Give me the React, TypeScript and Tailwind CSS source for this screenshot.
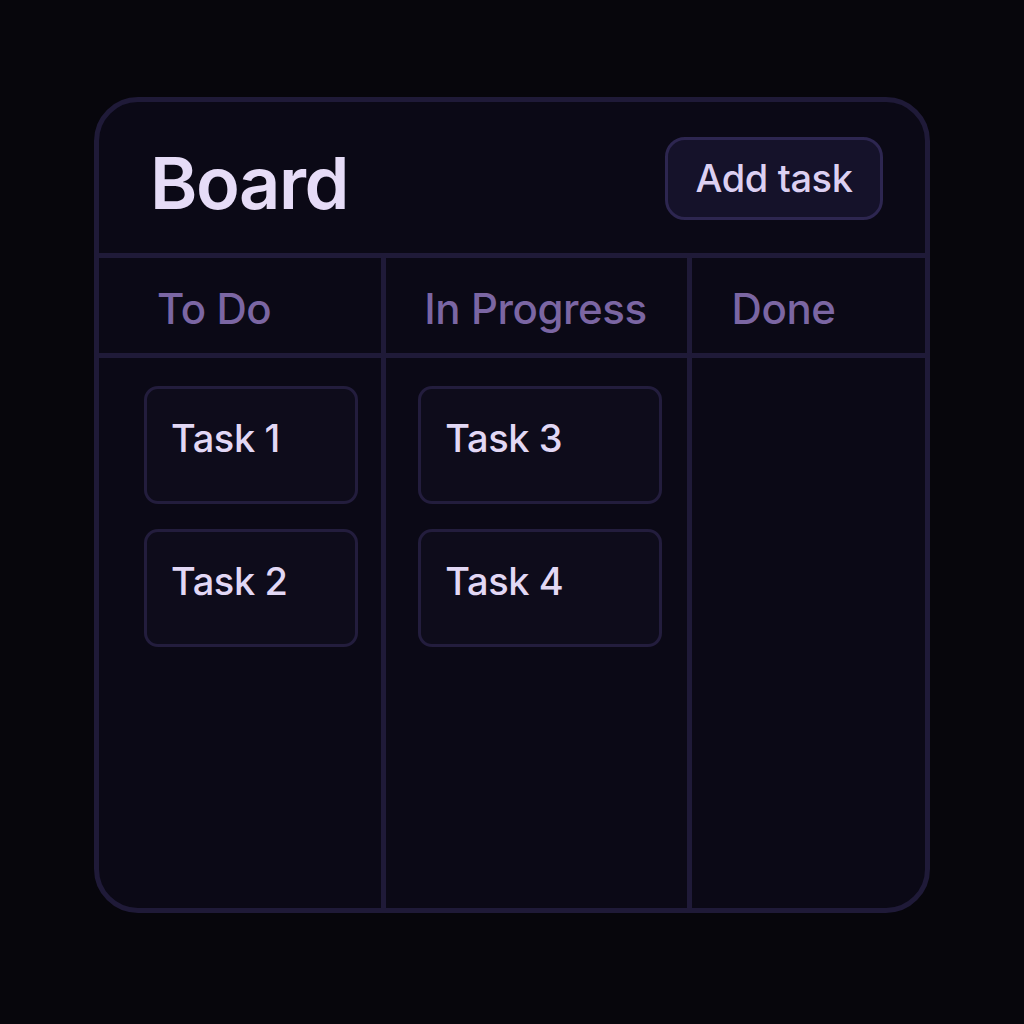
const columns = [
  { title: 'To Do', width: 'w-[288px]', head: 'pl-[58px]', body: 'pl-[45px]', card: 'w-[214px]', tasks: ['Task 1', 'Task 2'] },
  { title: 'In Progress', width: 'w-[306px]', head: 'pl-[38px]', body: 'pl-[32px]', card: 'w-[244px]', tasks: ['Task 3', 'Task 4'] },
  { title: 'Done', width: 'w-[234px]', head: 'pl-[40px]', body: 'pl-[32px]', card: 'w-[214px]', tasks: [] as string[] },
];

function TaskCard({ label, width }: { label: string; width: string }) {
  return (
    <div
      className={`${width} h-[118px] rounded-[14px] border-[3px] border-[#231d3d] bg-[#0e0c1b] pl-[24px] pt-[26px] text-[38px] leading-[46px] font-medium tracking-[-0.01em] text-[#e2d8f5]`}
    >
      {label}
    </div>
  );
}

export default function App() {
  return (
    <div
      className="flex h-[1024px] w-[1024px] bg-[#07060c] pl-[94px] pt-[97px]"
      style={{ fontFamily: 'Inter, "Noto Sans", sans-serif' }}
    >
      <div className="flex h-[816px] w-[836px] flex-col overflow-hidden rounded-[44px] border-[5px] border-[#1f1a38] bg-[#0b0916]">
        <header className="flex h-[156px] shrink-0 items-center justify-between border-b-[5px] border-[#1f1a38] pl-[51px] pr-[42px]">
          <h1 className="mt-[10px] text-[72px] font-semibold leading-none tracking-[-0.02em] text-[#e6dcf7]">Board</h1>
          <button className="mt-[2px] flex h-[83px] w-[218px] items-center justify-center rounded-[20px] border-[3px] border-[#2d2650] bg-[#15122a] text-[38px] font-medium tracking-[-0.01em] text-[#dcd0f2]">
            Add task
          </button>
        </header>
        <div className="flex flex-1">
          {columns.map((col, i) => (
            <section
              key={col.title}
              className={`${col.width} flex flex-col ${i < columns.length - 1 ? 'border-r-[5px] border-[#1f1a38]' : ''}`}
            >
              <div className={`flex h-[100px] shrink-0 items-center border-b-[5px] border-[#1f1a38] pt-[6px] ${col.head}`}>
                <span className="text-[42px] font-medium tracking-[-0.01em] text-[#7b66a3]">{col.title}</span>
              </div>
              <div className={`flex flex-col gap-[25px] pt-[28px] ${col.body}`}>
                {col.tasks.map((t) => (
                  <TaskCard key={t} label={t} width={col.card} />
                ))}
              </div>
            </section>
          ))}
        </div>
      </div>
    </div>
  );
}
